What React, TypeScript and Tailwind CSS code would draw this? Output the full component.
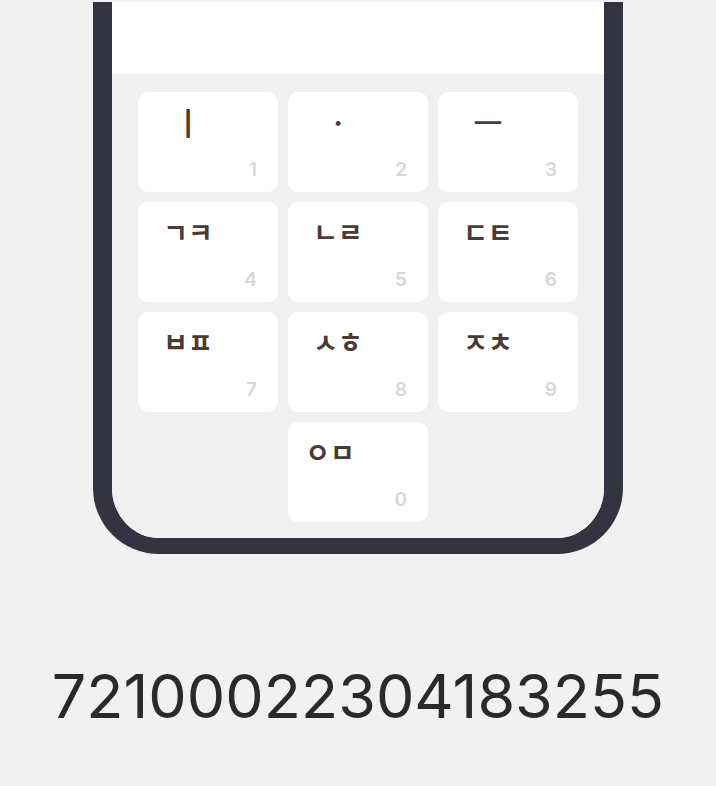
const keys = [
  { label: 'ㅣ', num: '1', big: true },
  { label: 'ㆍ', num: '2', big: true },
  { label: 'ㅡ', num: '3', big: true },
  { label: 'ㄱㅋ', num: '4' },
  { label: 'ㄴㄹ', num: '5' },
  { label: 'ㄷㅌ', num: '6' },
  { label: 'ㅂㅍ', num: '7' },
  { label: 'ㅅㅎ', num: '8' },
  { label: 'ㅈㅊ', num: '9' },
  { label: 'ㅇㅁ', num: '0', last: true },
];

function Key({ label, num, big, last }: { label: string; num: string; big?: boolean; last?: boolean }) {
  return (
    <div className={`h-[100px] rounded-[10px] bg-white flex flex-col ${last ? 'col-start-2' : ''}`}>
      <div className={`h-[58px] flex items-center ${last ? 'w-[84px]' : 'w-[100px]'} justify-center`}>
        <span
          className={
            big
              ? 'text-[32px] font-medium text-[#4a3b35] leading-none'
              : 'text-[27px] font-bold text-[#4a3b35] leading-none'
          }
          style={{ fontFamily: '"Noto Sans CJK KR", "Noto Sans", sans-serif' }}
        >
          {label}
        </span>
      </div>
      <div className="mt-auto pb-[13px] flex justify-end pr-[21px] text-[19px] font-semibold text-[#d7d7d7] leading-none [font-family:Inter,sans-serif]">
        {num}
      </div>
    </div>
  );
}

export default function App() {
  return (
    <div className="min-h-screen bg-[#f1f1f1] pt-[2px]">
      <div className="flex justify-center">
        <div className="w-[530px] border-x-[19px] border-b-[16px] border-[#343341] rounded-b-[66px] overflow-hidden">
          <div className="h-[72px] bg-white" />
          <div className="bg-[#f0f0f0] px-[26px] pt-[18px] pb-[16px] grid grid-cols-3 gap-[10px]">
            {keys.map((k) => (
              <Key key={k.num} {...k} />
            ))}
          </div>
        </div>
      </div>
      <div className="pt-[112px] text-center text-[61px] leading-none text-[#2a2a2a] [font-family:Inter,sans-serif]">
        72100022304183255
      </div>
    </div>
  );
}
